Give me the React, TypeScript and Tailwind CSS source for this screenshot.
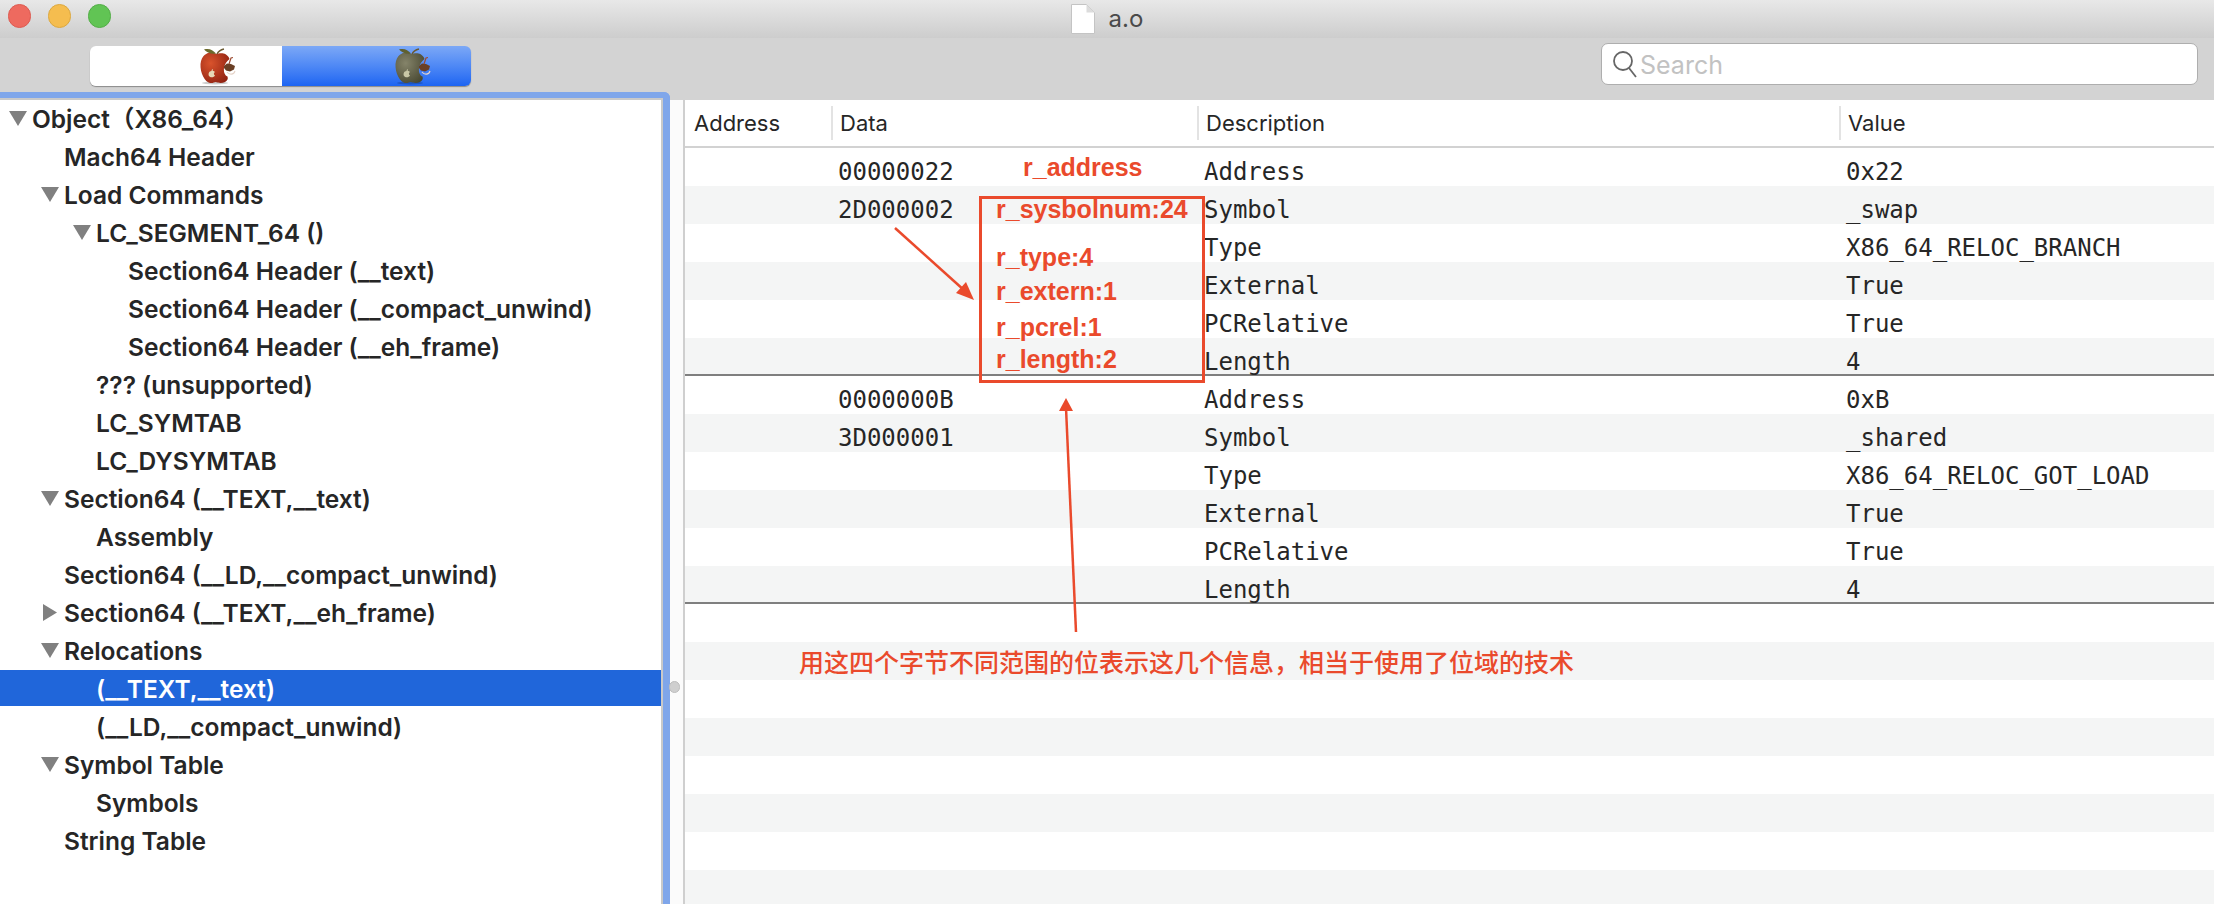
import { useId } from 'react'

type Node = { label: string; indent: number; arrow?: 'down' | 'right'; selected?: boolean }

const tree: Node[] = [
  { label: 'Object（X86_64）', indent: 0, arrow: 'down' },
  { label: 'Mach64 Header', indent: 1 },
  { label: 'Load Commands', indent: 1, arrow: 'down' },
  { label: 'LC_SEGMENT_64 ()', indent: 2, arrow: 'down' },
  { label: 'Section64 Header (__text)', indent: 3 },
  { label: 'Section64 Header (__compact_unwind)', indent: 3 },
  { label: 'Section64 Header (__eh_frame)', indent: 3 },
  { label: '??? (unsupported)', indent: 2 },
  { label: 'LC_SYMTAB', indent: 2 },
  { label: 'LC_DYSYMTAB', indent: 2 },
  { label: 'Section64 (__TEXT,__text)', indent: 1, arrow: 'down' },
  { label: 'Assembly', indent: 2 },
  { label: 'Section64 (__LD,__compact_unwind)', indent: 1 },
  { label: 'Section64 (__TEXT,__eh_frame)', indent: 1, arrow: 'right' },
  { label: 'Relocations', indent: 1, arrow: 'down' },
  { label: '(__TEXT,__text)', indent: 2, selected: true },
  { label: '(__LD,__compact_unwind)', indent: 2 },
  { label: 'Symbol Table', indent: 1, arrow: 'down' },
  { label: 'Symbols', indent: 2 },
  { label: 'String Table', indent: 1 },
]

const indentCls = ['pl-[9px]', 'pl-[41px]', 'pl-[73px]', 'pl-[105px]']

const rows: string[][] = [
  ['00000022', 'Address', '0x22'],
  ['2D000002', 'Symbol', '_swap'],
  ['', 'Type', 'X86_64_RELOC_BRANCH'],
  ['', 'External', 'True'],
  ['', 'PCRelative', 'True'],
  ['', 'Length', '4'],
  ['0000000B', 'Address', '0xB'],
  ['3D000001', 'Symbol', '_shared'],
  ['', 'Type', 'X86_64_RELOC_GOT_LOAD'],
  ['', 'External', 'True'],
  ['', 'PCRelative', 'True'],
  ['', 'Length', '4'],
  ['', '', ''],
  ['', '', ''],
  ['', '', ''],
  ['', '', ''],
  ['', '', ''],
  ['', '', ''],
  ['', '', ''],
  ['', '', ''],
]

const notes = [
  { text: 'r_address', cls: 'left-[1023px] top-[152px]' },
  { text: 'r_sysbolnum:24', cls: 'left-[996px] top-[194px]' },
  { text: 'r_type:4', cls: 'left-[996px] top-[242px]' },
  { text: 'r_extern:1', cls: 'left-[996px] top-[276px]' },
  { text: 'r_pcrel:1', cls: 'left-[996px] top-[312px]' },
  { text: 'r_length:2', cls: 'left-[996px] top-[344px]' },
]

function Apple({ body, dark, leaf, logo }: { body: string; dark: string; leaf: string; logo: string }) {
  const id = useId()
  return (
    <svg width="38" height="38" viewBox="0 0 38 38" className="shrink-0">
      <defs>
        <radialGradient id={id} cx="0.35" cy="0.35" r="0.8">
          <stop offset="0" stopColor={body} />
          <stop offset="1" stopColor={dark} />
        </radialGradient>
      </defs>
      <ellipse cx="15" cy="36" rx="13" ry="1.5" fill="#000" opacity="0.2" />
      <path d="M16 7C12 4 2 5 .5 17 0 26 5 35 10 36c3 .5 4-1 6-1 2 1 6 1.500 9 0 2-1 3.500-3 2.500-5.500-2.500-1-4-4-3.500-8.500.5-4 3-7 5.500-9-.5-2-3-5-6-5.500C20 6 18 7 16 7z" fill={`url(#${id})`} />
      <path d="M16 6.500C13 3 9 1 4 2.500c3 3 7 5 12 4z" fill={leaf} />
      <path d="M17 7c1-2 3-4 7-5" fill="none" stroke="#6b5a32" strokeWidth="1.4" />
      <path d="M24 19l3-2.500 4 .5 4 2-1 3.500-4 2-4-1-2-2.500z" fill="#6a3f25" />
      <path d="M29 17l2-6 2-.5" fill="none" stroke="#9c4a30" strokeWidth="1.2" />
      <path d="M27 25c2 3 7 3 8-1" fill="none" stroke="#e6d5ca" strokeWidth="1.1" />
      <path d="M9 29c-1-2 0-5 2.500-5 0-1 .5-1.500 1.500-2 0 1 0 1.500-.5 2 1.500 0 2 .5 2.500 1-1.500 1-1.500 2.500 0 3.500-1 2-4.500 2.500-6 .5z" fill={logo} />
    </svg>
  )
}

function Arrow({ dir }: { dir?: 'down' | 'right' }) {
  if (dir === 'down') {
    return (
      <svg width="18" height="15" viewBox="0 0 18 15" className="shrink-0">
        <path d="M0 0h18L9 15z" fill="#808080" />
      </svg>
    )
  }
  if (dir === 'right') {
    return (
      <svg width="18" height="17" viewBox="0 0 18 17" className="shrink-0">
        <path d="M2 0l14 8.500L2 17z" fill="#808080" />
      </svg>
    )
  }
  return <div className="w-[18px] shrink-0" />
}

function TitleBar() {
  return (
    <div className="relative h-[38px] flex items-center justify-center gap-[14px] bg-gradient-to-b from-[#e8e8e8] to-[#cdcdcd]">
      <div className="absolute left-[8px] top-[4px] flex gap-[17px]">
        <div className="w-[23px] h-[24px] rounded-full bg-[#ee6a5f] border border-[#dd5a50]" />
        <div className="w-[23px] h-[24px] rounded-full bg-[#f5bd4f] border border-[#dca83f]" />
        <div className="w-[23px] h-[24px] rounded-full bg-[#61c454] border border-[#52ad46]" />
      </div>
      <svg width="24" height="30" viewBox="0 0 24 30">
        <path d="M.5.5h15l8 8v21H.5z" fill="#fff" stroke="#c4c4c4" />
        <path d="M15.500.5v8h8z" fill="#dcdcdc" />
      </svg>
      <span className="text-[24px] text-[#4a4a4a] font-['Inter',sans-serif]">a.o</span>
    </div>
  )
}

function Toolbar() {
  return (
    <div className="h-[54px] bg-[#d3d3d3] flex items-center pl-[90px] pr-[16px] justify-between">
      <div className="flex h-[40px] w-[381px] rounded-[6px] shadow-[0_1px_1px_rgba(0,0,0,0.35)] overflow-hidden mt-[1px]">
        <div className="w-[192px] bg-white flex items-center justify-end">
          <div className="mr-[44px] h-[38px]"><Apple body="#d9532c" dark="#8c1f10" leaf="#6b6a2c" logo="#e6d9b8" /></div>
        </div>
        <div className="flex-1 bg-gradient-to-b from-[#7ca8f6] to-[#1c64f2] flex items-center justify-end">
          <div className="mr-[38px] h-[38px]"><Apple body="#85846a" dark="#45452f" leaf="#5f6030" logo="#c9c7a6" /></div>
        </div>
      </div>
      <div className="h-[42px] w-[597px] rounded-[7px] bg-white border border-[#aeaeae] flex items-center pl-[10px] gap-[2px] mb-[2px]">
        <svg width="26" height="30" viewBox="0 0 26 30" fill="none" stroke="#666" strokeWidth="1.8">
          <circle cx="11" cy="12" r="9" />
          <path d="M17 19l7 9" />
        </svg>
        <span className="text-[25px] text-[#c2c2c2] mt-[3px] font-['Inter',sans-serif]">Search</span>
      </div>
    </div>
  )
}

function Sidebar() {
  return (
    <div className="w-[670px] h-[812px] shrink-0 border-t-[6px] border-r-[7px] border-[#7fa6ea] rounded-tr-[6px] overflow-hidden">
      <div className="h-full bg-white border-t-2 border-r-2 border-[#c9c9c9] font-['Inter','Noto_Sans_CJK_SC',sans-serif]">
        {tree.map(n => (
          <div key={n.label} className="h-[38px]">
            <div className={`h-[36px] flex items-center gap-[5px] text-[24.5px] font-semibold ${indentCls[n.indent]} ${n.selected ? 'bg-[#2066da] text-white' : 'text-[#262626]'}`}>
              <Arrow dir={n.arrow} />
              <span className="whitespace-pre mt-[2px]">{n.label}</span>
            </div>
          </div>
        ))}
      </div>
    </div>
  )
}

function DataTable() {
  return (
    <div className="flex-1 min-w-0 h-[804px] mt-[8px] overflow-hidden bg-white">
      <div className="h-[48px] grid grid-cols-[146px_366px_642px_1fr] border-b-2 border-[#d2d2d2] items-center text-[22px] text-[#262626] font-['Inter',sans-serif]">
        {['Address', 'Data', 'Description', 'Value'].map((h, i) => (
          <div key={h} className={`h-[34px] flex items-center ${i === 0 ? 'pl-[9px]' : 'pl-[7px] border-l-2 border-[#e3e3e3]'}`}>{h}</div>
        ))}
      </div>
      {rows.map((r, i) => (
        <div key={i} className={`h-[38px] grid grid-cols-[146px_366px_642px_1fr] pt-[9px] text-[24px] leading-[30px] text-[#262626] font-['DejaVu_Sans_Mono',monospace] whitespace-pre ${i % 2 === 1 ? 'bg-[#f4f5f5]' : 'bg-white'} ${i === 5 || i === 11 ? 'border-b-2 border-[#7f7f7f]' : ''}`}>
          <div />
          <div className="pl-[7px]">{r[0]}</div>
          <div className="pl-[7px]">{r[1]}</div>
          <div className="pl-[7px]">{r[2]}</div>
        </div>
      ))}
    </div>
  )
}

export default function App() {
  return (
    <div className="relative w-[2214px] h-[904px] overflow-hidden bg-[#d3d3d3]">
      <TitleBar />
      <Toolbar />
      <div className="flex">
        <Sidebar />
        <div className="relative w-[15px] h-[804px] mt-[8px] bg-[#fbfbfb] border-r-2 border-[#cfcfcf]">
          <div className="absolute left-[-1px] top-[581px] w-[11px] h-[12px] rounded-full bg-[#cfcfcf] border border-[#bdbdbd]" />
        </div>
        <DataTable />
      </div>

      {/* red annotations drawn over the screenshot */}
      <div className="absolute left-[979px] top-[196px] w-[226px] h-[187px] border-[3px] border-[#ea4a2c]" />
      {notes.map(n => (
        <span key={n.text} className={`absolute ${n.cls} text-[25px] leading-[30px] font-bold text-[#ea4a2c] font-['Liberation_Sans',sans-serif]`}>{n.text}</span>
      ))}
      <span className="absolute left-[799px] top-[646px] text-[25px] leading-[30px] font-medium whitespace-nowrap text-[#ea4a2c] font-['Noto_Sans_CJK_SC',sans-serif]">用这四个字节不同范围的位表示这几个信息，相当于使用了位域的技术</span>
      <svg className="absolute left-0 top-0 pointer-events-none" width="2214" height="904" fill="none">
        <path d="M895 228L965 291" stroke="#ea4a2c" strokeWidth="2.5" />
        <path d="M974 300l-18-7 10-11z" fill="#ea4a2c" />
        <path d="M1076 632L1066 408" stroke="#ea4a2c" strokeWidth="2.5" />
        <path d="M1066 398l7 13h-14z" fill="#ea4a2c" />
      </svg>
    </div>
  )
}
